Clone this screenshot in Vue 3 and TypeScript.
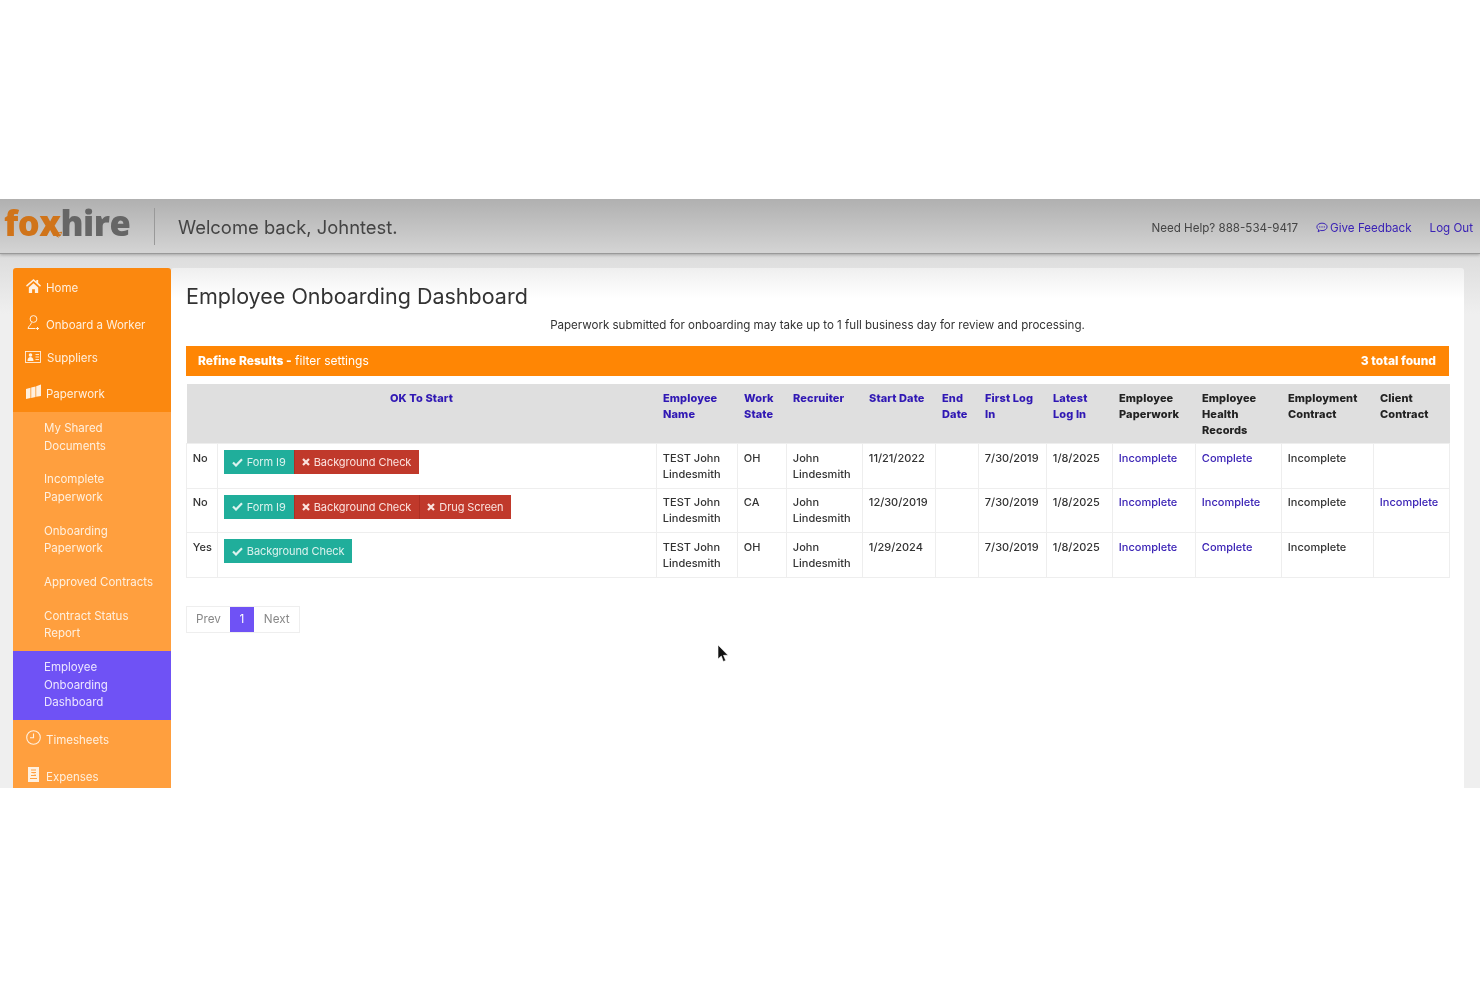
<script setup lang="ts">
interface Check {
  label: string
  ok: boolean
}

interface Row {
  ok: string
  checks: Check[]
  state: string
  start: string
  health: string
  client: string
}

const headers = [
  { label: 'Employee Name', link: true },
  { label: 'Work State', link: true },
  { label: 'Recruiter', link: true },
  { label: 'Start Date', link: true },
  { label: 'End Date', link: true },
  { label: 'First Log In', link: true },
  { label: 'Latest Log In', link: true },
  { label: 'Employee Paperwork', link: false },
  { label: 'Employee Health Records', link: false },
  { label: 'Employment Contract', link: false },
  { label: 'Client Contract', link: false }
]

const colWidths = [31, 439, 81, 49, 76, 73, 43, 68, 66, 83, 86, 92, 76]

const rows: Row[] = [
  {
    ok: 'No',
    checks: [
      { label: 'Form I9', ok: true },
      { label: 'Background Check', ok: false }
    ],
    state: 'OH',
    start: '11/21/2022',
    health: 'Complete',
    client: ''
  },
  {
    ok: 'No',
    checks: [
      { label: 'Form I9', ok: true },
      { label: 'Background Check', ok: false },
      { label: 'Drug Screen', ok: false }
    ],
    state: 'CA',
    start: '12/30/2019',
    health: 'Incomplete',
    client: 'Incomplete'
  },
  {
    ok: 'Yes',
    checks: [{ label: 'Background Check', ok: true }],
    state: 'OH',
    start: '1/29/2024',
    health: 'Complete',
    client: ''
  }
]

const subItems = [
  { label: 'My Shared Documents', active: false },
  { label: 'Incomplete Paperwork', active: false },
  { label: 'Onboarding Paperwork', active: false },
  { label: 'Approved Contracts', active: false },
  { label: 'Contract Status Report', active: false },
  { label: 'Employee Onboarding Dashboard', active: true }
]
</script>

<template>
  <div class="page">
    <div class="frame">
      <header class="topbar">
        <div class="logo">
          <span class="fox">fox</span><span class="hire">hire</span>
          <svg class="tail" width="9" height="8" viewBox="0 0 9 8" fill="none" stroke="#d0741a" stroke-width="1">
            <path d="M.5 1.500c1 3 3 5 5 5.500 1.500-1 3-3 3-5-2 1.200-5 1-8-.5z" />
          </svg>
        </div>
        <div class="welcome">Welcome back, Johntest.</div>
        <div class="top-links">
          <span class="help">Need Help? 888-534-9417</span>
          <a class="link feedback">
            <svg width="12" height="11" viewBox="0 0 16 14" fill="none" stroke="currentColor" stroke-width="1.300">
              <path d="M8 1.200c3.800 0 6.800 2.200 6.800 5s-3 5-6.800 5c-.8 0-1.500-.1-2.200-.3L2.800 12.800l.8-2.800C2 9.100 1.200 7.700 1.200 6.200c0-2.800 3-5 6.800-5z" />
              <path d="M5 6.200h.1M8 6.200h.1M11 6.200h.1" stroke-linecap="round" stroke-width="1.600" />
            </svg>
            Give Feedback
          </a>
          <a class="link">Log Out</a>
        </div>
      </header>

      <div class="body">
        <nav class="sidebar">
          <div class="nav-item home">
            <svg class="nav-icon" width="15" height="14" viewBox="0 0 16 15" fill="currentColor">
              <path d="M8 0 0 7l1 1.200L8 2.200l7 6L16 7l-3-2.600V1h-2v1.700L8 0z" />
              <path d="M3 9 8 4.500 13 9v6H9.500v-4h-3v4H3V9z" />
            </svg>
            <span>Home</span>
          </div>
          <div class="nav-item onboard">
            <svg class="nav-icon" width="15" height="15" viewBox="0 0 15 15" fill="none" stroke="currentColor" stroke-width="1">
              <circle cx="7.500" cy="4" r="3.400" />
              <path d="M5.500 7.500C5 10 2.500 11 2 13.500h7.500M11.500 12v3M10 13.500h3" />
            </svg>
            <span>Onboard a Worker</span>
          </div>
          <div class="nav-item suppliers">
            <svg class="nav-icon" width="16" height="12" viewBox="0 0 16 12" fill="none" stroke="currentColor" stroke-width=".9">
              <rect x=".5" y=".5" width="15" height="11" />
              <circle cx="5.500" cy="4" r="1.800" fill="currentColor" stroke="none" />
              <path d="M2.500 10c0-3 1.500-4 3-4s3 1 3 4z" fill="currentColor" stroke="none" />
              <path d="M10.500 3.500h3.500M10.500 6h3.500M10.500 8.500h3.500" />
            </svg>
            <span>Suppliers</span>
          </div>
          <div class="nav-item paperwork">
            <svg class="nav-icon" width="15" height="15" viewBox="0 0 15 15" fill="currentColor">
              <path d="M0 5 4.500 3.800V14L0 15zM5.200 3.600 9.500 2.400V13l-4.300 1zM10.200 2.200 15 .5V12l-4.800.8z" />
            </svg>
            <span>Paperwork</span>
          </div>

          <div class="lighter">
            <div
              v-for="item in subItems"
              :key="item.label"
              class="sub-item"
              :class="{ active: item.active }"
            >
              <span>{{ item.label }}</span>
            </div>
            <div class="nav-item timesheets">
              <svg class="nav-icon" width="15" height="15" viewBox="0 0 15 15" fill="none" stroke="currentColor" stroke-width="1.100">
                <circle cx="7.500" cy="7.500" r="6.800" />
                <path d="M7.500 3.500v4.200H4" />
              </svg>
              <span>Timesheets</span>
            </div>
            <div class="nav-item expenses">
              <svg class="nav-icon" width="11" height="15" viewBox="0 0 11 15" fill="currentColor">
                <path d="M0 0h11v15H0zM3 2.500v1h5v-1zM3 5c0 2 5 1 5 3H3v1h5c1-2-4-2-4-3h4V5zM2 11v1h7v-1z" fill-rule="evenodd" />
              </svg>
              <span>Expenses</span>
            </div>
          </div>
        </nav>

        <main class="content">
          <h1>Employee Onboarding Dashboard</h1>
          <p class="note">Paperwork submitted for onboarding may take up to 1 full business day for review and processing.</p>

          <div class="refine">
            <div><b>Refine Results -</b> filter settings</div>
            <b>3 total found</b>
          </div>

          <table class="grid">
            <colgroup>
              <col v-for="(w, i) in colWidths" :key="i" :style="{ width: w + 'px' }" />
            </colgroup>
            <thead>
              <tr>
                <th colspan="2" class="center"><a class="head-link">OK To Start</a></th>
                <th v-for="h in headers" :key="h.label">
                  <a :class="{ 'head-link': h.link }">{{ h.label }}</a>
                </th>
              </tr>
            </thead>
            <tbody>
              <tr v-for="(row, i) in rows" :key="i">
                <td>{{ row.ok }}</td>
                <td class="checks">
                  <span
                    v-for="c in row.checks"
                    :key="c.label"
                    class="check"
                    :class="c.ok ? 'pass' : 'fail'"
                  >
                    <svg v-if="c.ok" width="11" height="9" viewBox="0 0 11 9" fill="none" stroke="currentColor" stroke-width="2.200">
                      <path d="M1 4.500 4 7.500 10 1.200" />
                    </svg>
                    <svg v-else width="8" height="8" viewBox="0 0 8 8" fill="none" stroke="currentColor" stroke-width="2.200">
                      <path d="M1 1l6 6M7 1 1 7" />
                    </svg>
                    {{ c.label }}
                  </span>
                </td>
                <td>TEST John Lindesmith</td>
                <td>{{ row.state }}</td>
                <td>John Lindesmith</td>
                <td>{{ row.start }}</td>
                <td></td>
                <td>7/30/2019</td>
                <td>1/8/2025</td>
                <td><a class="link">Incomplete</a></td>
                <td><a class="link">{{ row.health }}</a></td>
                <td>Incomplete</td>
                <td><a class="link">{{ row.client }}</a></td>
              </tr>
            </tbody>
          </table>

          <div class="pager">
            <span class="page-btn prev">Prev</span>
            <span class="page-btn current">1</span>
            <span class="page-btn next">Next</span>
          </div>

          <svg class="cursor" width="11" height="17" viewBox="0 0 11 17">
            <path d="M0 0v14l3.300-3 2 5.500 2.400-1-2.200-5.200H10z" fill="#111" stroke="#fff" stroke-width=".6" />
          </svg>
        </main>
      </div>
    </div>
  </div>
</template>

<style scoped>
.page {
  width: 1480px;
  height: 987px;
  padding-top: 199px;
  box-sizing: border-box;
  background: #fff;
  overflow: hidden;
  font-family: Inter, "Noto Sans", sans-serif;
  font-size: 11.5px;
  color: #333;
}

.frame {
  height: 589px;
  overflow: hidden;
  background: #f0f0f0;
  filter: blur(0.4px);
}

.topbar {
  height: 55px;
  display: flex;
  align-items: center;
  box-sizing: border-box;
  padding: 0 7px 0 4px;
  background: linear-gradient(#b0b0b0, #d4d4d4);
  border-bottom: 1px solid #999;
  box-shadow: 0 1px 3px rgba(0, 0, 0, 0.25);
  position: relative;
}

.logo {
  position: relative;
  width: 150px;
  height: 37px;
  border-right: 1px solid #999;
  font-family: "Open Sans", sans-serif;
  font-weight: 800;
  font-size: 34.500px;
  line-height: 30px;
  letter-spacing: -0.5px;
}

.fox {
  color: #d0741a;
}

.hire {
  color: #666;
}

.tail {
  position: absolute;
  left: 49px;
  top: 22px;
}

.welcome {
  margin-left: 23px;
  font-size: 18.4px;
  color: #444;
  flex: 1;
  padding-top: 1px;
}

.top-links {
  display: flex;
  align-items: center;
  gap: 18px;
  font-size: 11.6px;
  padding-top: 3px;
}

.help {
  color: #444;
}

.link {
  color: #3a22b5;
}

.feedback {
  display: flex;
  align-items: center;
  gap: 2px;
}

.body {
  display: flex;
  padding: 14px 16px 0 13px;
  background: linear-gradient(#dcdcdc, #efefef 60px);
  height: 534px;
  box-sizing: border-box;
}

.sidebar {
  width: 158px;
  flex-shrink: 0;
  background: #fb880f;
  color: #fff0df;
  border-radius: 3px 3px 0 0;
}

.nav-item {
  display: flex;
  align-items: flex-end;
  padding-left: 13px;
  gap: 5px;
}

.nav-item span {
  line-height: 16px;
}

.nav-icon {
  flex-shrink: 0;
  margin-bottom: 3px;
}

.home {
  height: 28px;
}

.onboard {
  height: 37px;
}

.suppliers {
  height: 33px;
  padding-left: 12px;
  gap: 6px;
}

.paperwork {
  height: 36px;
}

.lighter {
  margin-top: 10px;
  padding-bottom: 10px;
  background: #ff9f3e;
}

.sub-item {
  padding: 8.150px 14px 8.150px 31px;
  line-height: 17.5px;
}

.sub-item.active {
  background: #6f52f5;
  color: #ece6ff;
  padding-right: 30px;
}

.timesheets {
  height: 28px;
}

.expenses {
  height: 37px;
  padding-left: 15px;
  gap: 7px;
}

.content {
  flex: 1;
  position: relative;
  background: linear-gradient(#efefef, #fff 30px);
  border-radius: 3px 3px 0 0;
  padding: 0 15px;
  min-width: 0;
}

h1 {
  margin: 0;
  padding-top: 14px;
  font-size: 21.5px;
  line-height: 28px;
  font-weight: 400;
  color: #333;
}

.note {
  margin: 7px 0 0;
  text-align: center;
  line-height: 16px;
  font-size: 11.55px;
  color: #333;
}

.refine {
  margin-top: 13px;
  height: 30px;
  background: #ff8604;
  color: #fff;
  display: flex;
  align-items: center;
  justify-content: space-between;
  box-sizing: border-box;
  padding: 0 13px 2px 12px;
  font-size: 12px;
}

.refine b {
  font-weight: 800;
}

.grid {
  margin-top: 8px;
  width: 1263px;
  table-layout: fixed;
  border-collapse: collapse;
  font-size: 11px;
  line-height: 16px;
}

th {
  background: #dfdfdf;
  box-sizing: border-box;
  padding: 6px 6.500px 5px;
  vertical-align: top;
  text-align: left;
  font-weight: 800;
  color: #222;
  letter-spacing: 0.1px;
}

th.center {
  text-align: center;
}

.head-link {
  color: #3018b4;
}

td {
  border: 1px solid #eee;
  padding: 5.500px 6px 6px 5.800px;
  vertical-align: top;
  font-weight: 500;
}

.checks {
  padding-top: 6px;
  padding-bottom: 0;
}

.check {
  display: inline-flex;
  vertical-align: top;
  align-items: center;
  gap: 4px;
  height: 24px;
  padding: 0 8px;
  color: #dcf2ee;
  font-weight: 400;
  letter-spacing: -0.08px;
}

.pass {
  background: #20ae9b;
}

.fail {
  background: #c0392b;
  color: #fbe3df;
  box-shadow: inset 1px 0 0 rgba(120, 20, 10, 0.25);
}

.pager {
  margin-top: 28px;
  display: inline-flex;
  height: 27px;
  border: 1px solid #eee;
  box-sizing: border-box;
  color: #888;
  font-size: 11.7px;
}

.page-btn {
  display: flex;
  align-items: center;
  justify-content: center;
}

.prev {
  padding: 0 9px;
}

.next {
  padding: 0 9px 0 10px;
}

.current {
  width: 24px;
  background: #6f52f5;
  color: #fff;
}

.cursor {
  position: absolute;
  left: 547px;
  top: 377px;
}
</style>

<style>
html,
body {
  margin: 0;
  background: #fff;
}
</style>
